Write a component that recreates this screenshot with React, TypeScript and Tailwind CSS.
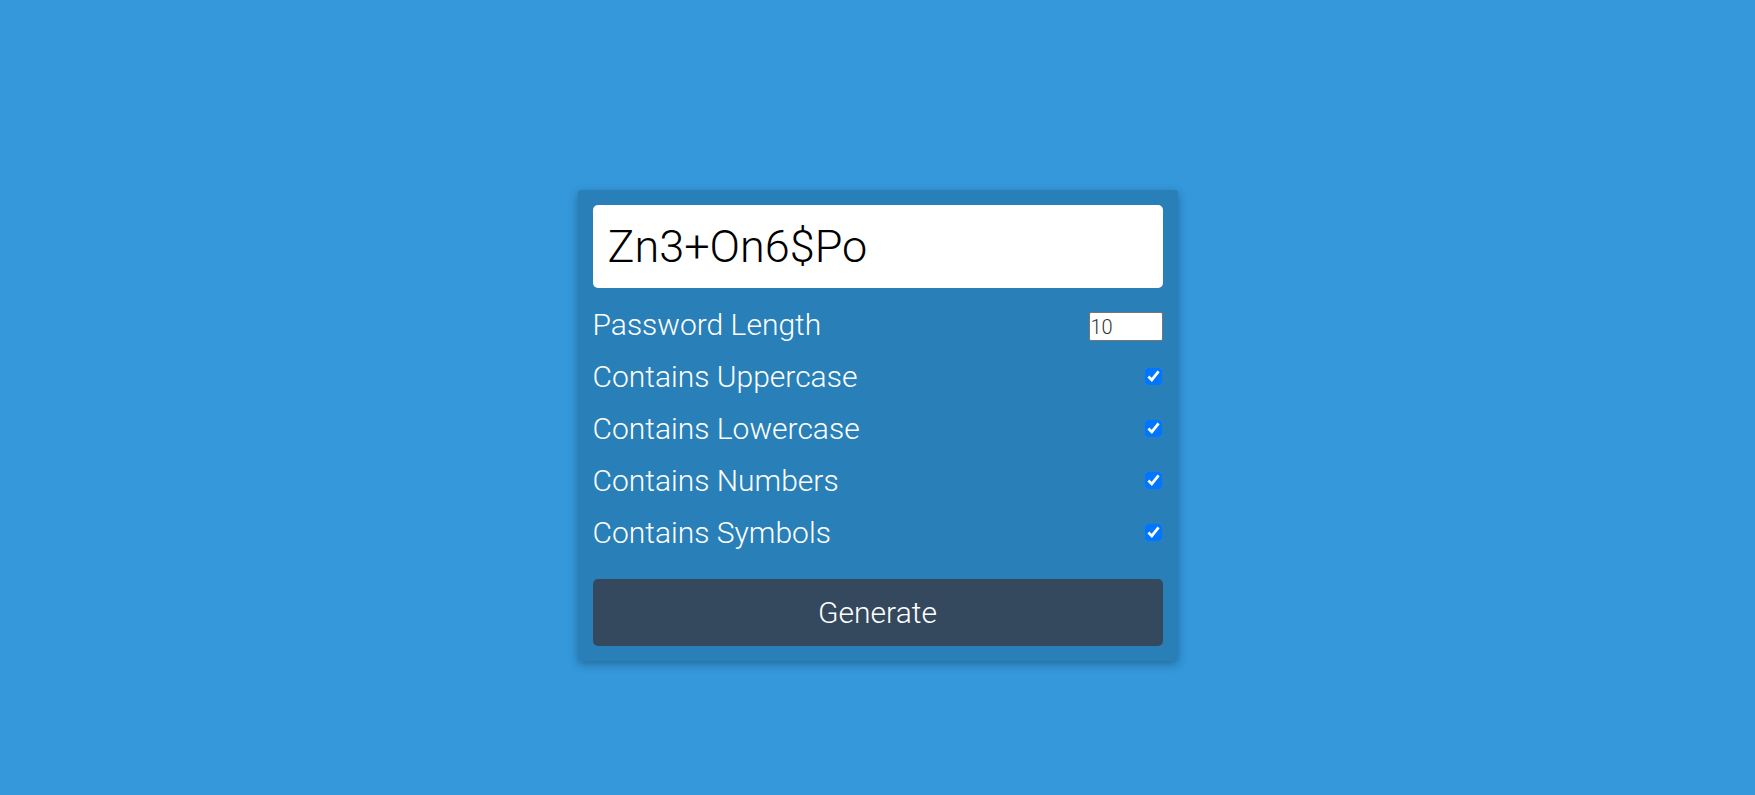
import { useState } from "react";

const options = [
  { key: "upper", label: "Contains Uppercase" },
  { key: "lower", label: "Contains Lowercase" },
  { key: "numbers", label: "Contains Numbers" },
  { key: "symbols", label: "Contains Symbols" },
];

export default function App() {
  const [length, setLength] = useState("10");
  const [checked, setChecked] = useState<Record<string, boolean>>({
    upper: true,
    lower: true,
    numbers: true,
    symbols: true,
  });

  return (
    <div className="flex min-h-screen justify-center bg-[#3498db] pt-[190px] font-['Roboto',sans-serif] font-light text-white">
      <div className="h-fit w-[600px] rounded-[3px] bg-[#2980b9] p-[15px] shadow-[0_3px_10px_rgba(0,0,0,0.3)]">
        <div className="mb-[10px] flex h-[83px] items-center rounded-[5px] bg-white px-[15px] text-[45px] text-black">
          Zn3+On6$Po
        </div>

        <div className="flex h-[52px] items-center justify-between text-[30px]">
          <label>Password Length</label>
          <input
            type="number"
            value={length}
            onChange={(e) => setLength(e.target.value)}
            className="mt-[5px] h-[29px] w-[74px] rounded-[2px] border border-[#767676] bg-white px-[1px] text-[20px] font-light text-[#333] outline-none"
          />
        </div>

        {options.map((o) => (
          <div key={o.key} className="flex h-[52px] items-center justify-between text-[30px]">
            <label>{o.label}</label>
            <input
              type="checkbox"
              checked={checked[o.key]}
              onChange={(e) => setChecked({ ...checked, [o.key]: e.target.checked })}
              className="m-0 mr-[1px] h-[17px] w-[17px]"
            />
          </div>
        ))}

        <button className="mt-[21px] flex h-[67px] w-full items-center justify-center rounded-[5px] bg-[#34495e] text-[30px] font-light text-white">
          Generate
        </button>
      </div>
    </div>
  );
}
